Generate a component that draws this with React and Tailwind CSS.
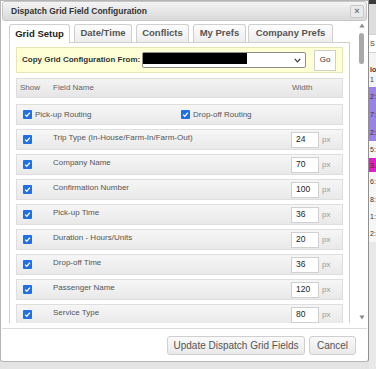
const rows = [
  { name: 'Trip Type (In-House/Farm-In/Farm-Out)', width: 24 },
  { name: 'Company Name', width: 70 },
  { name: 'Confirmation Number', width: 100 },
  { name: 'Pick-up Time', width: 36 },
  { name: 'Duration - Hours/Units', width: 20 },
  { name: 'Drop-off Time', width: 36 },
  { name: 'Passenger Name', width: 120 },
  { name: 'Service Type', width: 80 },
]

const tabs = [
  { label: 'Grid Setup', w: 'w-[61px]', active: true },
  { label: 'Date/Time', w: 'w-[58px]' },
  { label: 'Conflicts', w: 'w-[53px]' },
  { label: 'My Prefs', w: 'w-[53px]' },
  { label: 'Company Prefs', w: 'w-[85px]' },
]

const purple = ['2:', '7:', '2:']
const lower = [
  { t: '5:', c: 'h-[17px] bg-[#f6f6f6]' },
  { t: '3.', c: 'h-[14px] bg-[#e01fc4]' },
  { t: '6:', c: 'h-[19px] bg-[#f6f6f6]' },
  { t: '8:', c: 'h-[17px] bg-[#f6f6f6]' },
  { t: '1:', c: 'h-[17px] bg-[#f6f6f6]' },
  { t: '2:', c: 'h-[17px] bg-[#f6f6f6]' },
]

function Check() {
  return (
    <span className="flex h-[9px] w-[9px] shrink-0 items-center justify-center rounded-[1px] bg-[#1f6fe5]">
      <svg width="7" height="7" viewBox="0 0 8 8">
        <path d="M1.3 4.2 L3.2 6 L6.8 1.8" fill="none" stroke="white" strokeWidth="1.4" />
      </svg>
    </span>
  )
}

export default function App() {
  return (
    <div className="flex h-[369px] w-[376px] overflow-hidden bg-[#e4e4e4] font-['Liberation_Sans',Arial,sans-serif]">
      <div className="flex h-[362px] w-[369px] shrink-0 flex-col rounded-b-[3px] border border-[#b5b5b5] border-r-[#8f8f8f] bg-white">
        <div className="mx-[1px] flex h-[20px] items-center justify-between rounded-[3px] border border-[#c6c6c6] bg-gradient-to-b from-[#f4f4f4] to-[#d9d9d9] pl-[8px] pr-[2px]">
          <span className="text-[8.5px] font-bold text-[#333]">Dispatch Grid Field Configuration</span>
          <span className="flex h-[13px] w-[14px] items-center justify-center rounded-[2px] border border-[#c8c8c8] bg-[#eaeaea] text-[9px] font-bold leading-none text-[#777]">
            ×
          </span>
        </div>

        <div className="flex h-[302px] overflow-hidden">
          <div className="flex flex-1 flex-col pl-[8px] pr-[8px] pt-[2px]">
            <div className="flex items-end">
              {tabs.map((t, i) => (
                <div
                  key={t.label}
                  className={`${t.w} ${i === 4 ? 'ml-[2px]' : i > 0 ? 'ml-[4px]' : ''} flex h-[18px] items-center justify-center rounded-t-[3px] border border-b-0 border-[#cfcfcf] text-[9.5px] font-bold ${
                    t.active ? 'relative top-[1px] h-[19px] bg-white text-[#222]' : 'bg-gradient-to-b from-[#fdfdfd] to-[#ededed] text-[#555]'
                  }`}
                >
                  {t.label}
                </div>
              ))}
            </div>

            <div className="flex-1 border border-b-0 border-[#cfcfcf] px-[6px] pt-[4px]">
              <div className="flex h-[26px] items-center border border-[#e6e6b4] bg-[#ffffd6] pl-[5px]">
                <span className="w-[120px] text-[8px] font-bold text-[#333]">Copy Grid Configuration From:</span>
                <div className="relative flex h-[16px] w-[164px] items-center justify-end rounded-[2px] border border-[#8e8e8e] bg-white pr-[4px]">
                  <span className="absolute left-0 top-0 h-[11px] w-[104px] bg-black"></span>
                  <svg width="7" height="5" viewBox="0 0 7 5">
                    <path d="M0.8 0.8 L3.5 3.8 L6.2 0.8" fill="none" stroke="#333" strokeWidth="1.2" />
                  </svg>
                </div>
                <span className="ml-[8px] flex h-[21px] w-[22px] items-center justify-center border border-[#cfcfcf] bg-white text-[8px] text-[#333]">
                  Go
                </span>
              </div>

              <div className="mt-[5px] flex h-[20px] items-center border border-[#dedede] bg-gradient-to-b from-[#f3f3f3] to-[#e6e6e6] text-[8px] text-[#666]">
                <span className="w-[36px] pl-[3px]">Show</span>
                <span className="flex-1">Field Name</span>
                <span className="w-[50px]">Width</span>
              </div>

              <div className="mt-[6px] flex h-[21px] items-center border border-[#dedede] bg-gradient-to-b from-[#f6f6f6] to-[#e9e9e9] pl-[6px] text-[8px] text-[#555]">
                <Check />
                <span className="ml-[3px] w-[146px]">Pick-up Routing</span>
                <Check />
                <span className="ml-[3px]">Drop-off Routing</span>
              </div>

              {rows.map((r) => (
                <div
                  key={r.name}
                  className="mt-[4px] flex h-[21px] items-center border border-[#dedede] bg-gradient-to-b from-[#f6f6f6] to-[#e9e9e9] pl-[6px] text-[8px] text-[#555]"
                >
                  <Check />
                  <span className="-mt-[3px] ml-[21px] flex-1">{r.name}</span>
                  <span className="flex h-[16px] w-[28px] items-center border border-[#d0d0d0] bg-white pl-[4px] text-[8.5px] text-[#222]">
                    {r.width}
                  </span>
                  <span className="ml-[3px] w-[20px] text-[#999]">px</span>
                </div>
              ))}
            </div>
          </div>

          <div className="relative w-[10px] shrink-0">
            <svg className="absolute left-[1px] top-[2px]" width="6" height="5" viewBox="0 0 6 5">
              <path d="M3 0.5 L5.6 4.5 L0.4 4.5 Z" fill="#8a8a8a" />
            </svg>
            <div className="absolute left-[1px] top-[12px] h-[31px] w-[5px] rounded-full bg-[#a9a9a9]"></div>
            <svg className="absolute bottom-[3px] left-[1px]" width="6" height="5" viewBox="0 0 6 5">
              <path d="M0.4 0.5 L5.6 0.5 L3 4.5 Z" fill="#8a8a8a" />
            </svg>
          </div>
        </div>

        <div className="mx-[1px] mt-[5px] flex justify-end gap-[4px] border-t border-[#dcdcdc] pr-[11px] pt-[7px]">
          <span className="flex h-[19px] w-[138px] items-center justify-center rounded-[3px] border border-[#cfcfcf] bg-gradient-to-b from-[#fafafa] to-[#e9e9e9] text-[10px] text-[#555]">
            Update Dispatch Grid Fields
          </span>
          <span className="flex h-[19px] w-[47px] items-center justify-center rounded-[3px] border border-[#cfcfcf] bg-gradient-to-b from-[#fafafa] to-[#e9e9e9] text-[10px] text-[#555]">
            Cancel
          </span>
        </div>
      </div>

      <div className="flex flex-1 flex-col overflow-hidden text-[7px] leading-none text-[#333]">
        <div className="h-[4px] shrink-0 bg-[#3c3c3c]"></div>
        <div className="h-[30px] shrink-0 bg-[#dedede]"></div>
        <div className="flex h-[19px] shrink-0 items-center border-y border-[#cfcfcf] bg-white pl-[1px]">S</div>
        <div className="flex h-[34px] shrink-0 flex-col justify-end gap-[3px] bg-[#f4f4f4] pb-[4px] pl-[1px] font-bold">
          <span>lo</span>
          <span className="font-normal">1</span>
        </div>
        <div className="flex shrink-0 flex-col bg-[#9b82e6]">
          {purple.map((t, i) => (
            <div key={i} className="flex h-[18px] items-center pl-[1px]">
              {t}
            </div>
          ))}
        </div>
        {lower.map((s, i) => (
          <div key={i} className={`${s.c} flex shrink-0 items-center pl-[1px]`}>
            {s.t}
          </div>
        ))}
        <div className="flex-1 bg-[#e9e9e9]"></div>
      </div>
    </div>
  )
}
